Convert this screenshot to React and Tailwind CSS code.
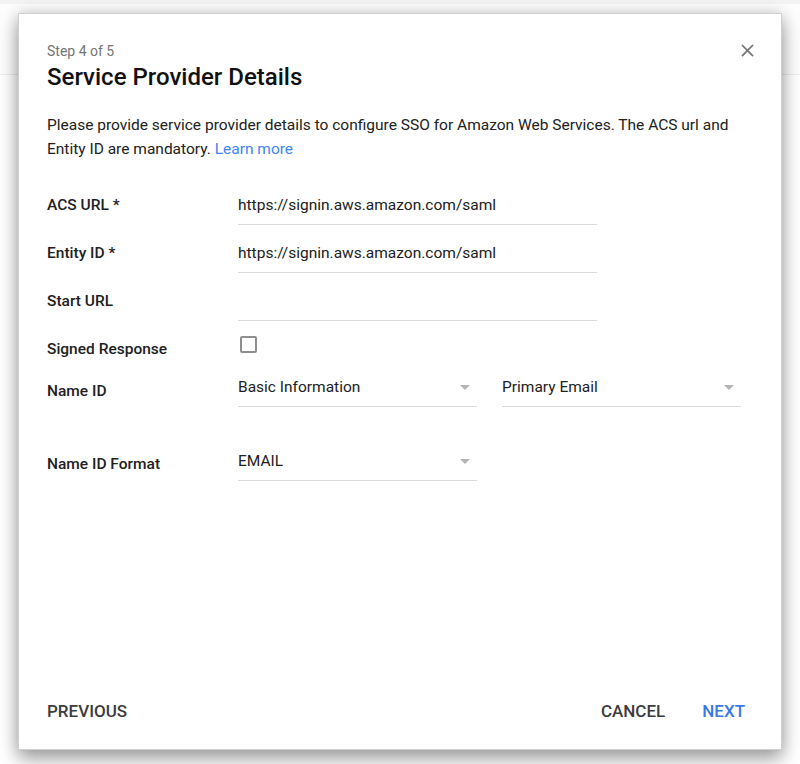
import React from "react";

function Field({ value }) {
  return (
    <div className="w-[359px] pt-2 pb-[7px] border-b border-[#dadada] text-[15.5px] leading-6 text-[#212121] h-10">
      {value}
    </div>
  );
}

function Select({ value }) {
  return (
    <div className="w-[239px] flex items-center justify-between pt-2 pb-[7px] pr-[7px] border-b border-[#dadada]">
      <span className="text-[15.5px] leading-6 text-[#212121]">{value}</span>
      <svg width="10" height="5" viewBox="0 0 10 5">
        <path d="M0 0h10L5 5z" fill="#b3b3b3" />
      </svg>
    </div>
  );
}

function Label({ children, className = "" }) {
  return (
    <div className={`w-[191px] shrink-0 text-[15.5px] font-medium text-[#212121] leading-6 ${className}`}>
      {children}
    </div>
  );
}

export default function App() {
  return (
    <div
      className="relative w-[800px] h-[764px] bg-white overflow-hidden"
      style={{ fontFamily: "Roboto, 'Liberation Sans', Arial, sans-serif" }}
    >
      <div className="h-[4px] bg-[#f3f3f3]" />
      <div className="h-[71px] border-b border-[#ececec] bg-[#fdfdfd]" />

      <div className="absolute left-[18px] top-[13px] w-[764px] h-[737px] bg-white border border-[#d0d0d0] shadow-[0_10px_18px_rgba(0,0,0,0.32),0_0_14px_rgba(0,0,0,0.18)] flex flex-col">
        <div className="pl-[28px] pr-[28px] pt-[27px]">
          <div className="flex justify-between items-start">
            <div>
              <div className="text-sm leading-5 text-[#757575]">Step 4 of 5</div>
              <h2 className="mt-[2px] text-[24px] leading-7 font-medium text-[#111]">
                Service Provider Details
              </h2>
            </div>
            <button className="-mt-[3px] -mr-[6px] w-6 h-6 flex items-center justify-center">
              <svg width="21" height="21" viewBox="0 0 24 24">
                <path
                  d="M19 6.41L17.59 5 12 10.59 6.41 5 5 6.41 10.59 12 5 17.59 6.41 19 12 13.41 17.59 19 19 17.59 13.41 12z"
                  fill="#757575"
                />
              </svg>
            </button>
          </div>

          <p className="mt-[22px] text-[15.5px] leading-6 text-[#212121]">
            Please provide service provider details to configure SSO for Amazon Web Services. The ACS url and
            Entity ID are mandatory. <span className="text-[#4285f4]">Learn more</span>
          </p>

          <div className="mt-6 flex flex-col">
            <div className="flex items-start h-12">
              <Label className="pt-2">ACS URL *</Label>
              <Field value="https://signin.aws.amazon.com/saml" />
            </div>
            <div className="flex items-start h-12">
              <Label className="pt-2">Entity ID *</Label>
              <Field value="https://signin.aws.amazon.com/saml" />
            </div>
            <div className="flex items-start h-12">
              <Label className="pt-2">Start URL</Label>
              <Field value="" />
            </div>
            <div className="flex items-start h-[38px]">
              <Label className="pt-2">Signed Response</Label>
              <div className="mt-[7px] ml-[2px] w-[17px] h-[17px] border-2 border-[#8f8f8f] rounded-[2px]" />
            </div>
            <div className="flex items-start">
              <Label className="pt-3">Name ID</Label>
              <Select value="Basic Information" />
              <div className="ml-[25px]">
                <Select value="Primary Email" />
              </div>
            </div>
            <div className="flex items-start mt-[34px]">
              <Label className="pt-[11px]">Name ID Format</Label>
              <Select value="EMAIL" />
            </div>
          </div>
        </div>

        <div className="mt-auto mb-[19px] pl-[20px] pr-[28px] flex items-center justify-between">
          <button className="h-9 px-2 text-[17px] font-medium text-[#3c3c3c] uppercase">Previous</button>
          <div className="flex items-center gap-[21px]">
            <button className="h-9 px-2 text-[17px] font-medium text-[#3c3c3c] uppercase">Cancel</button>
            <button className="h-9 px-2 text-[17px] font-medium text-[#3b78e7] uppercase">Next</button>
          </div>
        </div>
      </div>
    </div>
  );
}
